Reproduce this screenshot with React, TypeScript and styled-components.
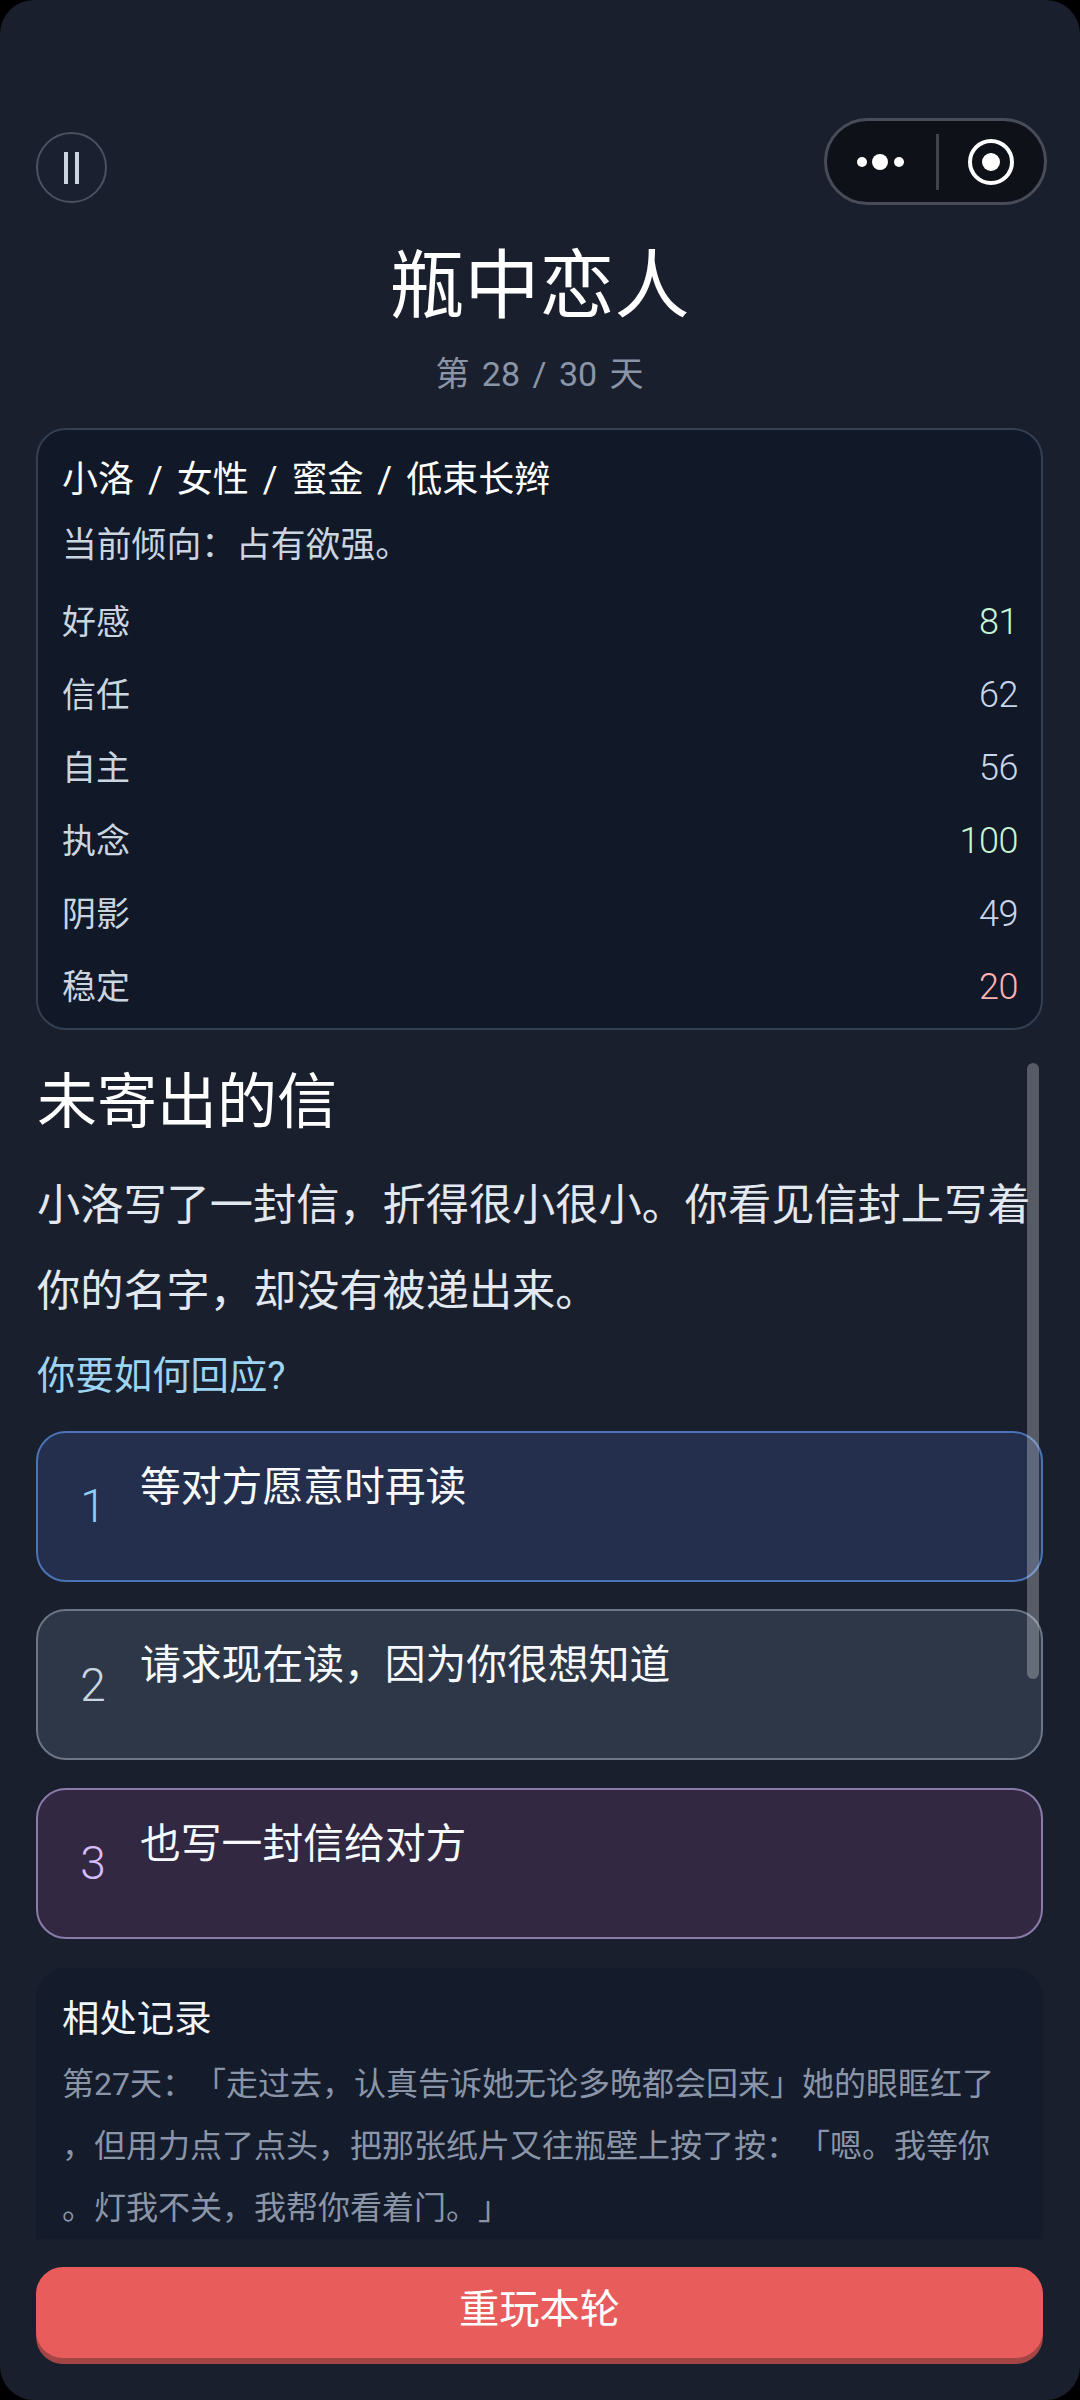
import React from "react";
import styled, { createGlobalStyle } from "styled-components";

const Global = createGlobalStyle`
  html, body { margin: 0; padding: 0; background: #000; }
  body {
    font-family: "Roboto", "Noto Sans CJK SC", sans-serif;
    font-weight: 400;
    text-spacing-trim: space-all;
  }
  * { box-sizing: border-box; }
`;

const Page = styled.div`
  width: 1080px;
  height: 2400px;
  background: #1a1f2d;
  border-radius: 34px;
  padding: 118px 37px 0 36px;
  overflow: hidden;
  color: #fff;
`;
const Header = styled.header`
  display: flex;
  justify-content: space-between;
  align-items: flex-start;
  margin-right: -4px;
`;
const PauseButton = styled.button`
  width: 71px;
  height: 71px;
  margin-top: 14px;
  padding: 0;
  border-radius: 50%;
  border: 2px solid #4a5160;
  background: #1a2030;
  display: flex;
  align-items: center;
  justify-content: center;
  gap: 7px;
`;
const PauseBar = styled.span`
  width: 4px;
  height: 32px;
  background: #cbd5e0;
`;
const Capsule = styled.div`
  width: 223px;
  height: 87px;
  border-radius: 44px;
  border: 3px solid #484c58;
  background: #0e1118;
  display: flex;
  align-items: center;
`;
const CapsuleSegment = styled.div<{ $shift?: number }>`
  flex: 1;
  display: flex;
  align-items: center;
  justify-content: center;
  padding-right: ${(p) => p.$shift ?? 0}px;
`;
const CapsuleDivider = styled.div`
  width: 3px;
  height: 56px;
  background: #3f434d;
`;
const Title = styled.h1`
  margin: 36px 0 0;
  font-size: 75px;
  line-height: 90px;
  font-weight: 400;
  text-align: center;
`;
const Subtitle = styled.div`
  margin-top: 20px;
  font-size: 34px;
  line-height: 46px;
  text-align: center;
  color: #8a95a8;
  word-spacing: 4px;
`;
const StatusCard = styled.section`
  margin-top: 31px;
  height: 602px;
  padding: 25px 23px 6px 24px;
  border: 2px solid #333f52;
  border-radius: 30px;
  background: #111827;
`;
const Name = styled.div`
  font-size: 36px;
  line-height: 50px;
  color: #fff;
  word-spacing: 5px;
`;
const Tendency = styled.div`
  margin: 15px 0 13px;
  font-size: 34.8px;
  line-height: 50px;
  color: #cbd5e0;
`;
const StatRow = styled.div`
  height: 73px;
  display: flex;
  align-items: center;
  justify-content: space-between;
  font-size: 34px;
  color: #cbd5e0;
`;
const StatValue = styled.span<{ $tone: "good" | "plain" | "bad" }>`
  padding-top: 4px;
  font-size: 36px;
  font-weight: 300;
  letter-spacing: -0.5px;
  color: ${(p) => (p.$tone === "good" ? "#c6f6d5" : p.$tone === "bad" ? "#feb2b2" : "#c9d5ea")};
`;
const Scroller = styled.div`
  position: relative;
  margin-top: 37px;
`;
const ScrollThumb = styled.div`
  position: absolute;
  left: 991px;
  top: -4px;
  width: 12px;
  height: 616px;
  border-radius: 6px;
  background: rgba(255, 255, 255, 0.27);
`;
const SceneTitle = styled.h2`
  margin: 0;
  padding-left: 1px;
  font-size: 60px;
  line-height: 72px;
  font-weight: 400;
`;
const Story = styled.p`
  margin: 24px 0 0;
  padding-left: 1px;
  font-size: 43.2px;
  line-height: 86.4px;
  color: #e2e8f0;
`;
const Question = styled.div`
  margin-top: 15.5px;
  padding-left: 1px;
  font-size: 38.4px;
  line-height: 50px;
  color: #9dd4f2;
`;
const Options = styled.div`
  margin-top: 29.5px;
  display: flex;
  flex-direction: column;
  gap: 27.5px;
`;
const Option = styled.div<{ $bg: string; $line: string }>`
  height: 151px;
  display: flex;
  align-items: center;
  padding-left: 8px;
  border: 2px solid ${(p) => p.$line};
  border-radius: 30px;
  background: ${(p) => p.$bg};
`;
const OptionNumber = styled.span<{ $color: string }>`
  width: 94px;
  text-align: center;
  font-size: 46px;
  font-weight: 300;
  color: ${(p) => p.$color};
`;
const OptionText = styled.span`
  align-self: flex-start;
  margin-top: 26px;
  font-size: 40.8px;
  line-height: 56px;
  color: #f7fafc;
`;
const Record = styled.section`
  margin-top: 29px;
  height: 271px;
  padding: 26px 26px 0;
  border-radius: 30px 30px 0 0;
  background: #141b2b;
  overflow: hidden;
`;
const RecordTitle = styled.div`
  font-size: 37.4px;
  line-height: 50px;
  color: #f1f5f9;
`;
const RecordText = styled.p`
  margin: 9px 0 0;
  font-size: 32px;
  line-height: 62px;
  color: #8a95a8;
  line-break: anywhere;
`;
const ReplayButton = styled.button`
  display: block;
  width: 100%;
  height: 91px;
  margin-top: 28px;
  padding: 0 0 5px;
  border: 0;
  border-radius: 27px;
  background: #e95c5c;
  box-shadow: 0 6px 0 #a34545;
  color: #fff;
  font-family: inherit;
  font-size: 40.3px;
  line-height: 56px;
`;

const stats: { label: string; value: number; tone: "good" | "plain" | "bad" }[] = [
  { label: "好感", value: 81, tone: "good" },
  { label: "信任", value: 62, tone: "plain" },
  { label: "自主", value: 56, tone: "plain" },
  { label: "执念", value: 100, tone: "good" },
  { label: "阴影", value: 49, tone: "plain" },
  { label: "稳定", value: 20, tone: "bad" },
];

const options = [
  { n: 1, text: "等对方愿意时再读", bg: "#242f4d", line: "#4a74b5", color: "#90cdf4" },
  { n: 2, text: "请求现在读\uFF0C因为你很想知道", bg: "#2d3748", line: "#6b7687", color: "#cbd5e0" },
  { n: 3, text: "也写一封信给对方", bg: "#322841", line: "#8a7bab", color: "#d6bcfa" },
];

const tendency = "当前倾向\uFF1A占有欲强。";
const story = "小洛写了一封信\uFF0C折得很小很小。你看见信封上写着你的名字\uFF0C却没有被递出来。";
const record =
  "第27天\uFF1A「走过去\uFF0C认真告诉她无论多晚都会回来」她的眼眶红了\uFF0C但用力点了点头\uFF0C把那张纸片又往瓶壁上按了按\uFF1A「嗯。我等你。灯我不关\uFF0C我帮你看着门。」";

export default function App() {
  return (
    <Page>
      <Global />
      <Header>
        <PauseButton aria-label="暂停">
          <PauseBar />
          <PauseBar />
        </PauseButton>
        <Capsule>
          <CapsuleSegment $shift={3}>
            <svg width="50" height="20" viewBox="0 0 50 20">
              <circle cx="7" cy="10" r="5" fill="#fff" />
              <circle cx="25" cy="10" r="8" fill="#fff" />
              <circle cx="44" cy="10" r="5" fill="#fff" />
            </svg>
          </CapsuleSegment>
          <CapsuleDivider />
          <CapsuleSegment>
            <svg width="48" height="48" viewBox="0 0 48 48">
              <circle cx="24" cy="24" r="21" fill="none" stroke="#fff" strokeWidth="4" />
              <circle cx="24" cy="24" r="9" fill="#fff" />
            </svg>
          </CapsuleSegment>
        </Capsule>
      </Header>
      <Title>瓶中恋人</Title>
      <Subtitle>第 28 / 30 天</Subtitle>
      <StatusCard>
        <Name>小洛 / 女性 / 蜜金 / 低束长辫</Name>
        <Tendency>{tendency}</Tendency>
        {stats.map((s) => (
          <StatRow key={s.label}>
            <span>{s.label}</span>
            <StatValue $tone={s.tone}>{s.value}</StatValue>
          </StatRow>
        ))}
      </StatusCard>
      <Scroller>
        <ScrollThumb />
        <SceneTitle>未寄出的信</SceneTitle>
        <Story>{story}</Story>
        <Question>你要如何回应?</Question>
        <Options>
          {options.map((o) => (
            <Option key={o.n} $bg={o.bg} $line={o.line}>
              <OptionNumber $color={o.color}>{o.n}</OptionNumber>
              <OptionText>{o.text}</OptionText>
            </Option>
          ))}
        </Options>
        <Record>
          <RecordTitle>相处记录</RecordTitle>
          <RecordText>{record}</RecordText>
        </Record>
      </Scroller>
      <ReplayButton>重玩本轮</ReplayButton>
    </Page>
  );
}
